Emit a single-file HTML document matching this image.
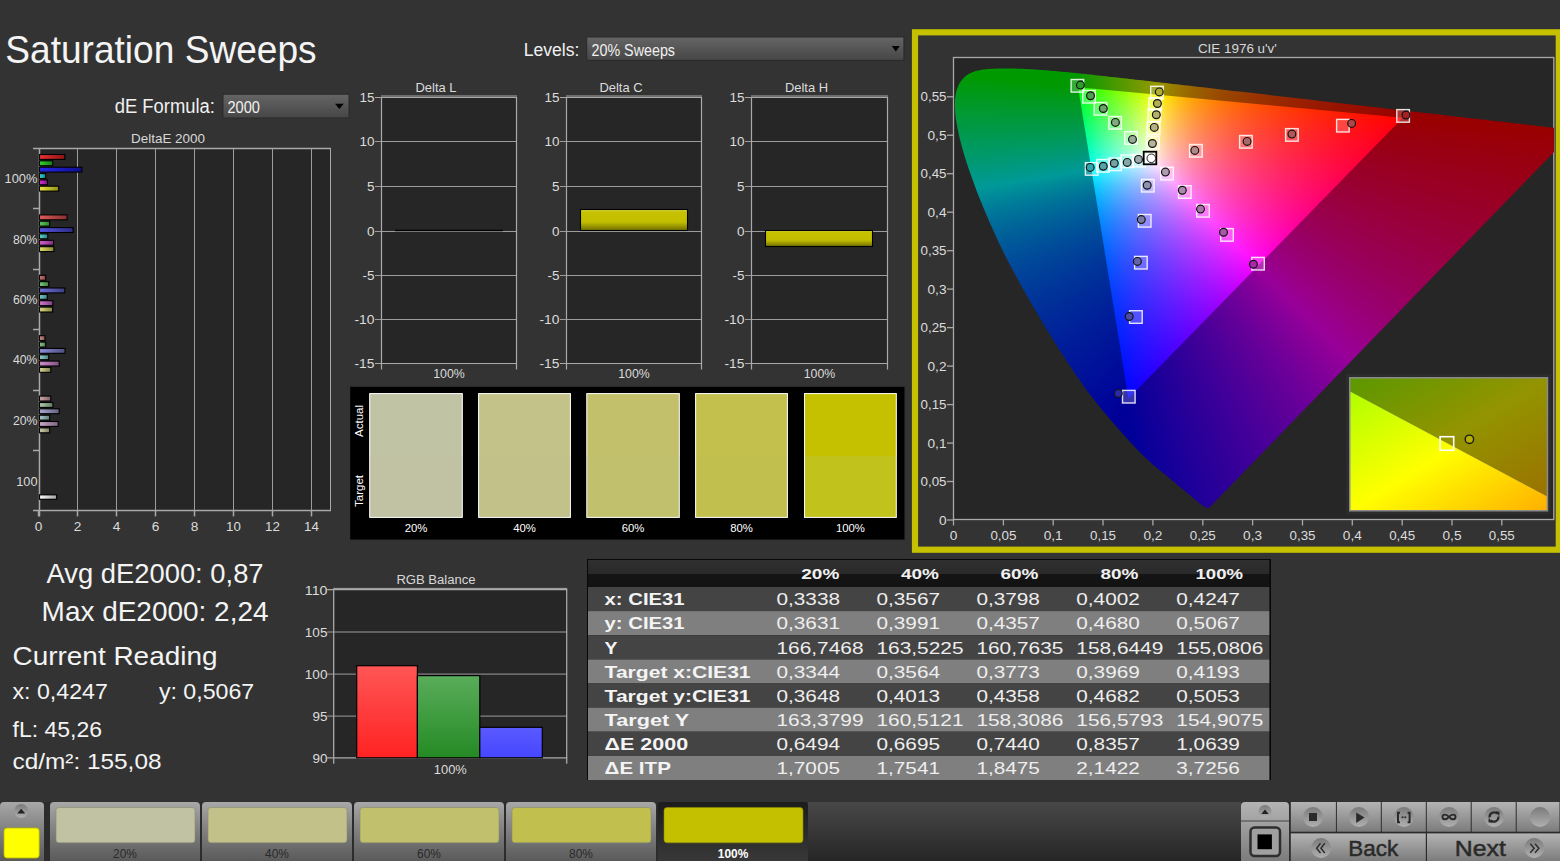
<!DOCTYPE html><html><head><meta charset="utf-8"><style>
html,body{margin:0;padding:0;background:#333333;width:1560px;height:861px;overflow:hidden;}
svg{position:absolute;left:0;top:0;}
text{font-family:"Liberation Sans", sans-serif;}
#cie{position:absolute;left:954px;top:58px;}
</style></head><body>
<svg width="1560" height="861" viewBox="0 0 1560 861">
<defs>
<linearGradient id="dd" x1="0" y1="0" x2="0" y2="1"><stop offset="0" stop-color="#656565"/><stop offset="1" stop-color="#464646"/></linearGradient>
<linearGradient id="ybar" x1="0" y1="0" x2="0" y2="1"><stop offset="0" stop-color="#dcda50"/><stop offset="0.12" stop-color="#c6c200"/><stop offset="0.6" stop-color="#c2be00"/><stop offset="1" stop-color="#6e6c00"/></linearGradient>
<linearGradient id="rbar" x1="0" y1="0" x2="0" y2="1"><stop offset="0" stop-color="#ff5656"/><stop offset="1" stop-color="#ff2222"/></linearGradient>
<linearGradient id="gbar" x1="0" y1="0" x2="0" y2="1"><stop offset="0" stop-color="#5aad5a"/><stop offset="1" stop-color="#248a24"/></linearGradient>
<linearGradient id="bbar" x1="0" y1="0" x2="0" y2="1"><stop offset="0" stop-color="#5a5aff"/><stop offset="1" stop-color="#4646ff"/></linearGradient>
<linearGradient id="hdr" x1="0" y1="0" x2="0" y2="1"><stop offset="0" stop-color="#2f2f2f"/><stop offset="0.5" stop-color="#2a2a2a"/><stop offset="0.5" stop-color="#151515"/><stop offset="1" stop-color="#121212"/></linearGradient>
<linearGradient id="tile" x1="0" y1="0" x2="0" y2="1"><stop offset="0" stop-color="#a8a8a8"/><stop offset="0.35" stop-color="#8a8a8a"/><stop offset="1" stop-color="#5a5a5a"/></linearGradient>
<linearGradient id="tilesel" x1="0" y1="0" x2="0" y2="1"><stop offset="0" stop-color="#1c1c1c"/><stop offset="1" stop-color="#383838"/></linearGradient>
<linearGradient id="barbg" x1="0" y1="0" x2="0" y2="1"><stop offset="0" stop-color="#484848"/><stop offset="1" stop-color="#262626"/></linearGradient>
<linearGradient id="btn" x1="0" y1="0" x2="0" y2="1"><stop offset="0" stop-color="#b4b4b4"/><stop offset="1" stop-color="#7c7c7c"/></linearGradient>
<linearGradient id="circ" x1="0" y1="0" x2="0" y2="1"><stop offset="0" stop-color="#7a7a7a"/><stop offset="1" stop-color="#b0b0b0"/></linearGradient>
</defs>
<text x="5.3" y="62.6" font-size="38.81" fill="#f4f4f4" text-anchor="start" font-weight="normal" textLength="311.3" lengthAdjust="spacingAndGlyphs" >Saturation Sweeps</text>
<text x="523.7" y="55.8" font-size="18.75" fill="#f0f0f0" text-anchor="start" font-weight="normal" textLength="55.7" lengthAdjust="spacingAndGlyphs" >Levels:</text>
<rect x="586.7" y="37.0" width="317.2" height="23.4" fill="url(#dd)" stroke="#2a2a2a" stroke-width="1" />
<text x="591.5" y="56.3" font-size="15.84" fill="#f0f0f0" text-anchor="start" font-weight="normal" textLength="83.5" lengthAdjust="spacingAndGlyphs" >20% Sweeps</text>
<polygon points="891.8,46 899.8,46 895.8,51.5" fill="#000"/>
<text x="114.7" y="113.0" font-size="19.33" fill="#f0f0f0" text-anchor="start" font-weight="normal" textLength="100.3" lengthAdjust="spacingAndGlyphs" >dE Formula:</text>
<rect x="223.0" y="94.2" width="126.0" height="23.8" fill="url(#dd)" stroke="#2a2a2a" stroke-width="1" />
<text x="227.5" y="112.5" font-size="15.84" fill="#f0f0f0" text-anchor="start" font-weight="normal" textLength="32.5" lengthAdjust="spacingAndGlyphs" >2000</text>
<polygon points="335,103.7 343.7,103.7 339.35,109" fill="#000"/>
<text x="131.0" y="142.5" font-size="12.35" fill="#d8d8d8" text-anchor="start" font-weight="normal" textLength="74.0" lengthAdjust="spacingAndGlyphs" >DeltaE 2000</text>
<rect x="39.0" y="148.0" width="292.0" height="362.4" fill="#262626" />
<line x1="77.5" y1="148.0" x2="77.5" y2="510.4" stroke="#9c9c9c" stroke-width="1"/>
<line x1="116.5" y1="148.0" x2="116.5" y2="510.4" stroke="#9c9c9c" stroke-width="1"/>
<line x1="155.5" y1="148.0" x2="155.5" y2="510.4" stroke="#9c9c9c" stroke-width="1"/>
<line x1="194.5" y1="148.0" x2="194.5" y2="510.4" stroke="#9c9c9c" stroke-width="1"/>
<line x1="233.5" y1="148.0" x2="233.5" y2="510.4" stroke="#9c9c9c" stroke-width="1"/>
<line x1="272.5" y1="148.0" x2="272.5" y2="510.4" stroke="#9c9c9c" stroke-width="1"/>
<line x1="311.5" y1="148.0" x2="311.5" y2="510.4" stroke="#9c9c9c" stroke-width="1"/>
<line x1="39.5" y1="148.0" x2="39.5" y2="516.4" stroke="#a9a9a9" stroke-width="1.5"/>
<line x1="33.0" y1="148.5" x2="331.0" y2="148.5" stroke="#a9a9a9" stroke-width="1.5"/>
<line x1="330.5" y1="148.0" x2="330.5" y2="510.4" stroke="#a9a9a9" stroke-width="1"/>
<line x1="33.0" y1="510.4" x2="331.0" y2="510.4" stroke="#a9a9a9" stroke-width="1.5"/>
<line x1="33.0" y1="208.5" x2="39.0" y2="208.5" stroke="#a9a9a9" stroke-width="1.5"/>
<line x1="33.0" y1="269.5" x2="39.0" y2="269.5" stroke="#a9a9a9" stroke-width="1.5"/>
<line x1="33.0" y1="329.5" x2="39.0" y2="329.5" stroke="#a9a9a9" stroke-width="1.5"/>
<line x1="33.0" y1="390.5" x2="39.0" y2="390.5" stroke="#a9a9a9" stroke-width="1.5"/>
<line x1="33.0" y1="450.5" x2="39.0" y2="450.5" stroke="#a9a9a9" stroke-width="1.5"/>
<line x1="38.5" y1="510.4" x2="38.5" y2="516.4" stroke="#a9a9a9" stroke-width="1.5"/>
<text x="38.5" y="531.0" font-size="12.65" fill="#dcdcdc" text-anchor="middle" font-weight="normal" textLength="7.6" lengthAdjust="spacingAndGlyphs" >0</text>
<line x1="77.5" y1="510.4" x2="77.5" y2="516.4" stroke="#a9a9a9" stroke-width="1.5"/>
<text x="77.5" y="531.0" font-size="12.65" fill="#dcdcdc" text-anchor="middle" font-weight="normal" textLength="7.6" lengthAdjust="spacingAndGlyphs" >2</text>
<line x1="116.5" y1="510.4" x2="116.5" y2="516.4" stroke="#a9a9a9" stroke-width="1.5"/>
<text x="116.5" y="531.0" font-size="12.65" fill="#dcdcdc" text-anchor="middle" font-weight="normal" textLength="7.6" lengthAdjust="spacingAndGlyphs" >4</text>
<line x1="155.5" y1="510.4" x2="155.5" y2="516.4" stroke="#a9a9a9" stroke-width="1.5"/>
<text x="155.5" y="531.0" font-size="12.65" fill="#dcdcdc" text-anchor="middle" font-weight="normal" textLength="7.6" lengthAdjust="spacingAndGlyphs" >6</text>
<line x1="194.5" y1="510.4" x2="194.5" y2="516.4" stroke="#a9a9a9" stroke-width="1.5"/>
<text x="194.5" y="531.0" font-size="12.65" fill="#dcdcdc" text-anchor="middle" font-weight="normal" textLength="7.6" lengthAdjust="spacingAndGlyphs" >8</text>
<line x1="233.5" y1="510.4" x2="233.5" y2="516.4" stroke="#a9a9a9" stroke-width="1.5"/>
<text x="233.5" y="531.0" font-size="12.65" fill="#dcdcdc" text-anchor="middle" font-weight="normal" textLength="14.8" lengthAdjust="spacingAndGlyphs" >10</text>
<line x1="272.5" y1="510.4" x2="272.5" y2="516.4" stroke="#a9a9a9" stroke-width="1.5"/>
<text x="272.5" y="531.0" font-size="12.65" fill="#dcdcdc" text-anchor="middle" font-weight="normal" textLength="14.8" lengthAdjust="spacingAndGlyphs" >12</text>
<line x1="311.5" y1="510.4" x2="311.5" y2="516.4" stroke="#a9a9a9" stroke-width="1.5"/>
<text x="311.5" y="531.0" font-size="12.65" fill="#dcdcdc" text-anchor="middle" font-weight="normal" textLength="14.8" lengthAdjust="spacingAndGlyphs" >14</text>
<text x="37.5" y="183.2" font-size="13.23" fill="#dcdcdc" text-anchor="end" font-weight="normal" textLength="33.0" lengthAdjust="spacingAndGlyphs" >100%</text>
<text x="37.5" y="243.6" font-size="13.23" fill="#dcdcdc" text-anchor="end" font-weight="normal" textLength="24.5" lengthAdjust="spacingAndGlyphs" >80%</text>
<text x="37.5" y="304.0" font-size="13.23" fill="#dcdcdc" text-anchor="end" font-weight="normal" textLength="24.5" lengthAdjust="spacingAndGlyphs" >60%</text>
<text x="37.5" y="364.4" font-size="13.23" fill="#dcdcdc" text-anchor="end" font-weight="normal" textLength="24.5" lengthAdjust="spacingAndGlyphs" >40%</text>
<text x="37.5" y="424.8" font-size="13.23" fill="#dcdcdc" text-anchor="end" font-weight="normal" textLength="24.5" lengthAdjust="spacingAndGlyphs" >20%</text>
<text x="37.5" y="485.8" font-size="13.23" fill="#dcdcdc" text-anchor="end" font-weight="normal" textLength="21.3" lengthAdjust="spacingAndGlyphs" >100</text>
<linearGradient id="bg0" x1="0" y1="0" x2="1" y2="0"><stop offset="0" stop-color="rgb(233,48,48)"/><stop offset="1" stop-color="rgb(141,20,20)"/></linearGradient>
<rect x="39.5" y="154.5" width="25.3" height="4.9" fill="url(#bg0)" stroke="#000" stroke-width="1.1" />
<linearGradient id="bg1" x1="0" y1="0" x2="1" y2="0"><stop offset="0" stop-color="rgb(51,211,51)"/><stop offset="1" stop-color="rgb(21,126,21)"/></linearGradient>
<rect x="39.5" y="160.8" width="13.2" height="4.9" fill="url(#bg1)" stroke="#000" stroke-width="1.1" />
<linearGradient id="bg2" x1="0" y1="0" x2="1" y2="0"><stop offset="0" stop-color="rgb(40,40,233)"/><stop offset="1" stop-color="rgb(14,14,141)"/></linearGradient>
<rect x="39.5" y="167.2" width="42.4" height="4.9" fill="url(#bg2)" stroke="#000" stroke-width="1.1" />
<linearGradient id="bg3" x1="0" y1="0" x2="1" y2="0"><stop offset="0" stop-color="rgb(51,216,216)"/><stop offset="1" stop-color="rgb(21,129,129)"/></linearGradient>
<rect x="39.5" y="173.6" width="6.2" height="4.9" fill="url(#bg3)" stroke="#000" stroke-width="1.1" />
<linearGradient id="bg4" x1="0" y1="0" x2="1" y2="0"><stop offset="0" stop-color="rgb(216,51,216)"/><stop offset="1" stop-color="rgb(129,21,129)"/></linearGradient>
<rect x="39.5" y="179.9" width="7.9" height="4.9" fill="url(#bg4)" stroke="#000" stroke-width="1.1" />
<linearGradient id="bg5" x1="0" y1="0" x2="1" y2="0"><stop offset="0" stop-color="rgb(238,233,62)"/><stop offset="1" stop-color="rgb(144,141,28)"/></linearGradient>
<rect x="39.5" y="186.2" width="19.2" height="4.9" fill="url(#bg5)" stroke="#000" stroke-width="1.1" />
<linearGradient id="bg6" x1="0" y1="0" x2="1" y2="0"><stop offset="0" stop-color="rgb(224,91,91)"/><stop offset="1" stop-color="rgb(135,48,48)"/></linearGradient>
<rect x="39.5" y="214.9" width="27.6" height="4.9" fill="url(#bg6)" stroke="#000" stroke-width="1.1" />
<linearGradient id="bg7" x1="0" y1="0" x2="1" y2="0"><stop offset="0" stop-color="rgb(93,209,93)"/><stop offset="1" stop-color="rgb(49,125,49)"/></linearGradient>
<rect x="39.5" y="221.2" width="10.2" height="4.9" fill="url(#bg7)" stroke="#000" stroke-width="1.1" />
<linearGradient id="bg8" x1="0" y1="0" x2="1" y2="0"><stop offset="0" stop-color="rgb(86,86,224)"/><stop offset="1" stop-color="rgb(44,44,135)"/></linearGradient>
<rect x="39.5" y="227.6" width="33.6" height="4.9" fill="url(#bg8)" stroke="#000" stroke-width="1.1" />
<linearGradient id="bg9" x1="0" y1="0" x2="1" y2="0"><stop offset="0" stop-color="rgb(93,212,212)"/><stop offset="1" stop-color="rgb(49,127,127)"/></linearGradient>
<rect x="39.5" y="233.9" width="8.3" height="4.9" fill="url(#bg9)" stroke="#000" stroke-width="1.1" />
<linearGradient id="bg10" x1="0" y1="0" x2="1" y2="0"><stop offset="0" stop-color="rgb(212,93,212)"/><stop offset="1" stop-color="rgb(127,49,127)"/></linearGradient>
<rect x="39.5" y="240.3" width="14.1" height="4.9" fill="url(#bg10)" stroke="#000" stroke-width="1.1" />
<linearGradient id="bg11" x1="0" y1="0" x2="1" y2="0"><stop offset="0" stop-color="rgb(228,224,101)"/><stop offset="1" stop-color="rgb(137,135,54)"/></linearGradient>
<rect x="39.5" y="246.7" width="14.4" height="4.9" fill="url(#bg11)" stroke="#000" stroke-width="1.1" />
<linearGradient id="bg12" x1="0" y1="0" x2="1" y2="0"><stop offset="0" stop-color="rgb(220,118,118)"/><stop offset="1" stop-color="rgb(132,65,65)"/></linearGradient>
<rect x="39.5" y="275.3" width="6.2" height="4.9" fill="url(#bg12)" stroke="#000" stroke-width="1.1" />
<linearGradient id="bg13" x1="0" y1="0" x2="1" y2="0"><stop offset="0" stop-color="rgb(120,208,120)"/><stop offset="1" stop-color="rgb(66,124,66)"/></linearGradient>
<rect x="39.5" y="281.7" width="9.2" height="4.9" fill="url(#bg13)" stroke="#000" stroke-width="1.1" />
<linearGradient id="bg14" x1="0" y1="0" x2="1" y2="0"><stop offset="0" stop-color="rgb(113,113,220)"/><stop offset="1" stop-color="rgb(62,62,132)"/></linearGradient>
<rect x="39.5" y="288.0" width="25.3" height="4.9" fill="url(#bg14)" stroke="#000" stroke-width="1.1" />
<linearGradient id="bg15" x1="0" y1="0" x2="1" y2="0"><stop offset="0" stop-color="rgb(120,210,210)"/><stop offset="1" stop-color="rgb(66,126,126)"/></linearGradient>
<rect x="39.5" y="294.4" width="7.8" height="4.9" fill="url(#bg15)" stroke="#000" stroke-width="1.1" />
<linearGradient id="bg16" x1="0" y1="0" x2="1" y2="0"><stop offset="0" stop-color="rgb(210,120,210)"/><stop offset="1" stop-color="rgb(126,66,126)"/></linearGradient>
<rect x="39.5" y="300.7" width="13.4" height="4.9" fill="url(#bg16)" stroke="#000" stroke-width="1.1" />
<linearGradient id="bg17" x1="0" y1="0" x2="1" y2="0"><stop offset="0" stop-color="rgb(222,220,125)"/><stop offset="1" stop-color="rgb(133,132,70)"/></linearGradient>
<rect x="39.5" y="307.1" width="13.1" height="4.9" fill="url(#bg17)" stroke="#000" stroke-width="1.1" />
<linearGradient id="bg18" x1="0" y1="0" x2="1" y2="0"><stop offset="0" stop-color="rgb(216,142,142)"/><stop offset="1" stop-color="rgb(129,81,81)"/></linearGradient>
<rect x="39.5" y="335.7" width="5.5" height="4.9" fill="url(#bg18)" stroke="#000" stroke-width="1.1" />
<linearGradient id="bg19" x1="0" y1="0" x2="1" y2="0"><stop offset="0" stop-color="rgb(143,207,143)"/><stop offset="1" stop-color="rgb(82,123,82)"/></linearGradient>
<rect x="39.5" y="342.1" width="6.2" height="4.9" fill="url(#bg19)" stroke="#000" stroke-width="1.1" />
<linearGradient id="bg20" x1="0" y1="0" x2="1" y2="0"><stop offset="0" stop-color="rgb(139,139,216)"/><stop offset="1" stop-color="rgb(79,79,129)"/></linearGradient>
<rect x="39.5" y="348.4" width="25.5" height="4.9" fill="url(#bg20)" stroke="#000" stroke-width="1.1" />
<linearGradient id="bg21" x1="0" y1="0" x2="1" y2="0"><stop offset="0" stop-color="rgb(143,209,209)"/><stop offset="1" stop-color="rgb(82,125,125)"/></linearGradient>
<rect x="39.5" y="354.8" width="9.2" height="4.9" fill="url(#bg21)" stroke="#000" stroke-width="1.1" />
<linearGradient id="bg22" x1="0" y1="0" x2="1" y2="0"><stop offset="0" stop-color="rgb(209,143,209)"/><stop offset="1" stop-color="rgb(125,82,125)"/></linearGradient>
<rect x="39.5" y="361.1" width="19.7" height="4.9" fill="url(#bg22)" stroke="#000" stroke-width="1.1" />
<linearGradient id="bg23" x1="0" y1="0" x2="1" y2="0"><stop offset="0" stop-color="rgb(218,216,147)"/><stop offset="1" stop-color="rgb(131,129,84)"/></linearGradient>
<rect x="39.5" y="367.4" width="11.3" height="4.9" fill="url(#bg23)" stroke="#000" stroke-width="1.1" />
<linearGradient id="bg24" x1="0" y1="0" x2="1" y2="0"><stop offset="0" stop-color="rgb(210,169,169)"/><stop offset="1" stop-color="rgb(126,99,99)"/></linearGradient>
<rect x="39.5" y="396.1" width="11.3" height="4.9" fill="url(#bg24)" stroke="#000" stroke-width="1.1" />
<linearGradient id="bg25" x1="0" y1="0" x2="1" y2="0"><stop offset="0" stop-color="rgb(170,206,170)"/><stop offset="1" stop-color="rgb(100,123,100)"/></linearGradient>
<rect x="39.5" y="402.5" width="13.4" height="4.9" fill="url(#bg25)" stroke="#000" stroke-width="1.1" />
<linearGradient id="bg26" x1="0" y1="0" x2="1" y2="0"><stop offset="0" stop-color="rgb(168,168,210)"/><stop offset="1" stop-color="rgb(98,98,126)"/></linearGradient>
<rect x="39.5" y="408.8" width="19.7" height="4.9" fill="url(#bg26)" stroke="#000" stroke-width="1.1" />
<linearGradient id="bg27" x1="0" y1="0" x2="1" y2="0"><stop offset="0" stop-color="rgb(170,207,207)"/><stop offset="1" stop-color="rgb(100,123,123)"/></linearGradient>
<rect x="39.5" y="415.2" width="10.2" height="4.9" fill="url(#bg27)" stroke="#000" stroke-width="1.1" />
<linearGradient id="bg28" x1="0" y1="0" x2="1" y2="0"><stop offset="0" stop-color="rgb(207,170,207)"/><stop offset="1" stop-color="rgb(123,100,123)"/></linearGradient>
<rect x="39.5" y="421.5" width="18.7" height="4.9" fill="url(#bg28)" stroke="#000" stroke-width="1.1" />
<linearGradient id="bg29" x1="0" y1="0" x2="1" y2="0"><stop offset="0" stop-color="rgb(211,210,173)"/><stop offset="1" stop-color="rgb(126,126,101)"/></linearGradient>
<rect x="39.5" y="427.9" width="10.2" height="4.9" fill="url(#bg29)" stroke="#000" stroke-width="1.1" />
<linearGradient id="wbar" x1="0" y1="0" x2="1" y2="0"><stop offset="0" stop-color="#ffffff"/><stop offset="1" stop-color="#a0a0a0"/></linearGradient>
<rect x="39.5" y="494.8" width="17.2" height="4.5" fill="url(#wbar)" stroke="#000" stroke-width="1.2" />
<rect x="381.0" y="97.0" width="135.0" height="266.5" fill="#262626" />
<line x1="375.0" y1="97.5" x2="516.0" y2="97.5" stroke="#a9a9a9" stroke-width="1"/>
<text x="374.5" y="102.0" font-size="12.79" fill="#dcdcdc" text-anchor="end" font-weight="normal" textLength="15.0" lengthAdjust="spacingAndGlyphs" >15</text>
<line x1="375.0" y1="141.5" x2="516.0" y2="141.5" stroke="#9c9c9c" stroke-width="1"/>
<text x="374.5" y="146.0" font-size="12.79" fill="#dcdcdc" text-anchor="end" font-weight="normal" textLength="15.0" lengthAdjust="spacingAndGlyphs" >10</text>
<line x1="375.0" y1="186.5" x2="516.0" y2="186.5" stroke="#9c9c9c" stroke-width="1"/>
<text x="374.5" y="191.0" font-size="12.79" fill="#dcdcdc" text-anchor="end" font-weight="normal" textLength="7.5" lengthAdjust="spacingAndGlyphs" >5</text>
<line x1="375.0" y1="231.5" x2="516.0" y2="231.5" stroke="#9c9c9c" stroke-width="1"/>
<text x="374.5" y="236.0" font-size="12.79" fill="#dcdcdc" text-anchor="end" font-weight="normal" textLength="7.5" lengthAdjust="spacingAndGlyphs" >0</text>
<line x1="375.0" y1="275.5" x2="516.0" y2="275.5" stroke="#9c9c9c" stroke-width="1"/>
<text x="374.5" y="280.0" font-size="12.79" fill="#dcdcdc" text-anchor="end" font-weight="normal" textLength="12.0" lengthAdjust="spacingAndGlyphs" >-5</text>
<line x1="375.0" y1="319.5" x2="516.0" y2="319.5" stroke="#9c9c9c" stroke-width="1"/>
<text x="374.5" y="324.0" font-size="12.79" fill="#dcdcdc" text-anchor="end" font-weight="normal" textLength="20.0" lengthAdjust="spacingAndGlyphs" >-10</text>
<line x1="375.0" y1="363.5" x2="516.0" y2="363.5" stroke="#a9a9a9" stroke-width="1"/>
<text x="374.5" y="368.0" font-size="12.79" fill="#dcdcdc" text-anchor="end" font-weight="normal" textLength="20.0" lengthAdjust="spacingAndGlyphs" >-15</text>
<line x1="381.5" y1="97.0" x2="381.5" y2="369.5" stroke="#a9a9a9" stroke-width="1.2"/>
<line x1="516.5" y1="97.0" x2="516.5" y2="369.5" stroke="#a9a9a9" stroke-width="1.2"/>
<line x1="381.0" y1="96.0" x2="517.0" y2="96.0" stroke="#a9a9a9" stroke-width="1"/>
<text x="436.0" y="92.0" font-size="12.94" fill="#dcdcdc" text-anchor="middle" font-weight="normal" >Delta L</text>
<text x="449.0" y="378.0" font-size="12.35" fill="#dcdcdc" text-anchor="middle" font-weight="normal" >100%</text>
<rect x="566.0" y="97.0" width="135.0" height="266.5" fill="#262626" />
<line x1="560.0" y1="97.5" x2="701.0" y2="97.5" stroke="#a9a9a9" stroke-width="1"/>
<text x="559.5" y="102.0" font-size="12.79" fill="#dcdcdc" text-anchor="end" font-weight="normal" textLength="15.0" lengthAdjust="spacingAndGlyphs" >15</text>
<line x1="560.0" y1="141.5" x2="701.0" y2="141.5" stroke="#9c9c9c" stroke-width="1"/>
<text x="559.5" y="146.0" font-size="12.79" fill="#dcdcdc" text-anchor="end" font-weight="normal" textLength="15.0" lengthAdjust="spacingAndGlyphs" >10</text>
<line x1="560.0" y1="186.5" x2="701.0" y2="186.5" stroke="#9c9c9c" stroke-width="1"/>
<text x="559.5" y="191.0" font-size="12.79" fill="#dcdcdc" text-anchor="end" font-weight="normal" textLength="7.5" lengthAdjust="spacingAndGlyphs" >5</text>
<line x1="560.0" y1="231.5" x2="701.0" y2="231.5" stroke="#9c9c9c" stroke-width="1"/>
<text x="559.5" y="236.0" font-size="12.79" fill="#dcdcdc" text-anchor="end" font-weight="normal" textLength="7.5" lengthAdjust="spacingAndGlyphs" >0</text>
<line x1="560.0" y1="275.5" x2="701.0" y2="275.5" stroke="#9c9c9c" stroke-width="1"/>
<text x="559.5" y="280.0" font-size="12.79" fill="#dcdcdc" text-anchor="end" font-weight="normal" textLength="12.0" lengthAdjust="spacingAndGlyphs" >-5</text>
<line x1="560.0" y1="319.5" x2="701.0" y2="319.5" stroke="#9c9c9c" stroke-width="1"/>
<text x="559.5" y="324.0" font-size="12.79" fill="#dcdcdc" text-anchor="end" font-weight="normal" textLength="20.0" lengthAdjust="spacingAndGlyphs" >-10</text>
<line x1="560.0" y1="363.5" x2="701.0" y2="363.5" stroke="#a9a9a9" stroke-width="1"/>
<text x="559.5" y="368.0" font-size="12.79" fill="#dcdcdc" text-anchor="end" font-weight="normal" textLength="20.0" lengthAdjust="spacingAndGlyphs" >-15</text>
<line x1="566.5" y1="97.0" x2="566.5" y2="369.5" stroke="#a9a9a9" stroke-width="1.2"/>
<line x1="701.5" y1="97.0" x2="701.5" y2="369.5" stroke="#a9a9a9" stroke-width="1.2"/>
<line x1="566.0" y1="96.0" x2="702.0" y2="96.0" stroke="#a9a9a9" stroke-width="1"/>
<text x="621.0" y="92.0" font-size="12.94" fill="#dcdcdc" text-anchor="middle" font-weight="normal" >Delta C</text>
<text x="634.0" y="378.0" font-size="12.35" fill="#dcdcdc" text-anchor="middle" font-weight="normal" >100%</text>
<rect x="751.0" y="97.0" width="136.0" height="266.5" fill="#262626" />
<line x1="745.0" y1="97.5" x2="887.0" y2="97.5" stroke="#a9a9a9" stroke-width="1"/>
<text x="744.5" y="102.0" font-size="12.79" fill="#dcdcdc" text-anchor="end" font-weight="normal" textLength="15.0" lengthAdjust="spacingAndGlyphs" >15</text>
<line x1="745.0" y1="141.5" x2="887.0" y2="141.5" stroke="#9c9c9c" stroke-width="1"/>
<text x="744.5" y="146.0" font-size="12.79" fill="#dcdcdc" text-anchor="end" font-weight="normal" textLength="15.0" lengthAdjust="spacingAndGlyphs" >10</text>
<line x1="745.0" y1="186.5" x2="887.0" y2="186.5" stroke="#9c9c9c" stroke-width="1"/>
<text x="744.5" y="191.0" font-size="12.79" fill="#dcdcdc" text-anchor="end" font-weight="normal" textLength="7.5" lengthAdjust="spacingAndGlyphs" >5</text>
<line x1="745.0" y1="231.5" x2="887.0" y2="231.5" stroke="#9c9c9c" stroke-width="1"/>
<text x="744.5" y="236.0" font-size="12.79" fill="#dcdcdc" text-anchor="end" font-weight="normal" textLength="7.5" lengthAdjust="spacingAndGlyphs" >0</text>
<line x1="745.0" y1="275.5" x2="887.0" y2="275.5" stroke="#9c9c9c" stroke-width="1"/>
<text x="744.5" y="280.0" font-size="12.79" fill="#dcdcdc" text-anchor="end" font-weight="normal" textLength="12.0" lengthAdjust="spacingAndGlyphs" >-5</text>
<line x1="745.0" y1="319.5" x2="887.0" y2="319.5" stroke="#9c9c9c" stroke-width="1"/>
<text x="744.5" y="324.0" font-size="12.79" fill="#dcdcdc" text-anchor="end" font-weight="normal" textLength="20.0" lengthAdjust="spacingAndGlyphs" >-10</text>
<line x1="745.0" y1="363.5" x2="887.0" y2="363.5" stroke="#a9a9a9" stroke-width="1"/>
<text x="744.5" y="368.0" font-size="12.79" fill="#dcdcdc" text-anchor="end" font-weight="normal" textLength="20.0" lengthAdjust="spacingAndGlyphs" >-15</text>
<line x1="751.5" y1="97.0" x2="751.5" y2="369.5" stroke="#a9a9a9" stroke-width="1.2"/>
<line x1="887.5" y1="97.0" x2="887.5" y2="369.5" stroke="#a9a9a9" stroke-width="1.2"/>
<line x1="751.0" y1="96.0" x2="888.0" y2="96.0" stroke="#a9a9a9" stroke-width="1"/>
<text x="806.5" y="92.0" font-size="12.94" fill="#dcdcdc" text-anchor="middle" font-weight="normal" >Delta H</text>
<text x="819.5" y="378.0" font-size="12.35" fill="#dcdcdc" text-anchor="middle" font-weight="normal" >100%</text>
<line x1="395.0" y1="230.5" x2="502.8" y2="230.5" stroke="#000" stroke-width="1.5"/>
<rect x="580.5" y="209.5" width="107.0" height="21.0" fill="url(#ybar)" stroke="#000" stroke-width="1.1" />
<rect x="765.5" y="230.5" width="107.0" height="16.0" fill="url(#ybar)" stroke="#000" stroke-width="1.1" />
<rect x="350.2" y="386.8" width="554.3" height="152.8" fill="#000" />
<rect x="369.7" y="393.6" width="92.6" height="123.8" fill="#c1c2a4" />
<rect x="369.7" y="393.6" width="92.6" height="62.5" fill="#c1c3a5" />
<rect x="369.7" y="393.6" width="92.6" height="123.8" fill="none" stroke="#ffffff" stroke-width="1" />
<text x="416.0" y="532.0" font-size="11.34" fill="#ffffff" text-anchor="middle" font-weight="normal" >20%</text>
<rect x="478.6" y="393.6" width="91.8" height="123.8" fill="#c1c189" />
<rect x="478.6" y="393.6" width="91.8" height="62.5" fill="#c2c289" />
<rect x="478.6" y="393.6" width="91.8" height="123.8" fill="none" stroke="#ffffff" stroke-width="1" />
<text x="524.5" y="532.0" font-size="11.34" fill="#ffffff" text-anchor="middle" font-weight="normal" >40%</text>
<rect x="586.8" y="393.6" width="92.5" height="123.8" fill="#c0c06d" />
<rect x="586.8" y="393.6" width="92.5" height="62.5" fill="#c2c06a" />
<rect x="586.8" y="393.6" width="92.5" height="123.8" fill="none" stroke="#ffffff" stroke-width="1" />
<text x="633.0" y="532.0" font-size="11.34" fill="#ffffff" text-anchor="middle" font-weight="normal" >60%</text>
<rect x="695.6" y="393.6" width="91.8" height="123.8" fill="#c1c04e" />
<rect x="695.6" y="393.6" width="91.8" height="62.5" fill="#c3c04e" />
<rect x="695.6" y="393.6" width="91.8" height="123.8" fill="none" stroke="#ffffff" stroke-width="1" />
<text x="741.5" y="532.0" font-size="11.34" fill="#ffffff" text-anchor="middle" font-weight="normal" >80%</text>
<rect x="804.5" y="393.6" width="91.8" height="123.8" fill="#c2c21c" />
<rect x="804.5" y="393.6" width="91.8" height="62.5" fill="#c5c000" />
<rect x="804.5" y="393.6" width="91.8" height="123.8" fill="none" stroke="#ffffff" stroke-width="1" />
<text x="850.4" y="532.0" font-size="11.34" fill="#ffffff" text-anchor="middle" font-weight="normal" >100%</text>
<text transform="translate(362.5,421) rotate(-90)" font-size="11.5" fill="#ffffff" text-anchor="middle" font-family='"Liberation Sans", sans-serif'>Actual</text>
<text transform="translate(362.5,491) rotate(-90)" font-size="11.5" fill="#ffffff" text-anchor="middle">Target</text>
<rect x="915.0" y="32.3" width="643.8" height="517.4" fill="none" stroke="#c5c100" stroke-width="6.2" />
<text x="1197.9" y="53.0" font-size="13.08" fill="#d8d8d8" text-anchor="start" font-weight="normal" textLength="79.0" lengthAdjust="spacingAndGlyphs" >CIE 1976 u'v'</text>
<rect x="953.5" y="57.5" width="600.3" height="462.0" fill="#262626" stroke="#a9a9a9" stroke-width="1.3" />
<line x1="947.0" y1="520.0" x2="953.5" y2="520.0" stroke="#a9a9a9" stroke-width="1.3"/>
<text x="946.5" y="524.6" font-size="12.79" fill="#dcdcdc" text-anchor="end" font-weight="normal" textLength="7.6" lengthAdjust="spacingAndGlyphs" >0</text>
<line x1="953.5" y1="519.5" x2="953.5" y2="525.5" stroke="#a9a9a9" stroke-width="1.3"/>
<text x="953.5" y="539.6" font-size="12.79" fill="#dcdcdc" text-anchor="middle" font-weight="normal" textLength="7.6" lengthAdjust="spacingAndGlyphs" >0</text>
<line x1="947.0" y1="481.5" x2="953.5" y2="481.5" stroke="#a9a9a9" stroke-width="1.3"/>
<text x="946.5" y="486.1" font-size="12.79" fill="#dcdcdc" text-anchor="end" font-weight="normal" textLength="26.0" lengthAdjust="spacingAndGlyphs" >0,05</text>
<line x1="1003.4" y1="519.5" x2="1003.4" y2="525.5" stroke="#a9a9a9" stroke-width="1.3"/>
<text x="1003.4" y="539.6" font-size="12.79" fill="#dcdcdc" text-anchor="middle" font-weight="normal" textLength="26.0" lengthAdjust="spacingAndGlyphs" >0,05</text>
<line x1="947.0" y1="443.1" x2="953.5" y2="443.1" stroke="#a9a9a9" stroke-width="1.3"/>
<text x="946.5" y="447.7" font-size="12.79" fill="#dcdcdc" text-anchor="end" font-weight="normal" textLength="19.0" lengthAdjust="spacingAndGlyphs" >0,1</text>
<line x1="1053.2" y1="519.5" x2="1053.2" y2="525.5" stroke="#a9a9a9" stroke-width="1.3"/>
<text x="1053.2" y="539.6" font-size="12.79" fill="#dcdcdc" text-anchor="middle" font-weight="normal" textLength="19.0" lengthAdjust="spacingAndGlyphs" >0,1</text>
<line x1="947.0" y1="404.6" x2="953.5" y2="404.6" stroke="#a9a9a9" stroke-width="1.3"/>
<text x="946.5" y="409.2" font-size="12.79" fill="#dcdcdc" text-anchor="end" font-weight="normal" textLength="26.0" lengthAdjust="spacingAndGlyphs" >0,15</text>
<line x1="1103.0" y1="519.5" x2="1103.0" y2="525.5" stroke="#a9a9a9" stroke-width="1.3"/>
<text x="1103.0" y="539.6" font-size="12.79" fill="#dcdcdc" text-anchor="middle" font-weight="normal" textLength="26.0" lengthAdjust="spacingAndGlyphs" >0,15</text>
<line x1="947.0" y1="366.1" x2="953.5" y2="366.1" stroke="#a9a9a9" stroke-width="1.3"/>
<text x="946.5" y="370.7" font-size="12.79" fill="#dcdcdc" text-anchor="end" font-weight="normal" textLength="19.0" lengthAdjust="spacingAndGlyphs" >0,2</text>
<line x1="1152.9" y1="519.5" x2="1152.9" y2="525.5" stroke="#a9a9a9" stroke-width="1.3"/>
<text x="1152.9" y="539.6" font-size="12.79" fill="#dcdcdc" text-anchor="middle" font-weight="normal" textLength="19.0" lengthAdjust="spacingAndGlyphs" >0,2</text>
<line x1="947.0" y1="327.6" x2="953.5" y2="327.6" stroke="#a9a9a9" stroke-width="1.3"/>
<text x="946.5" y="332.2" font-size="12.79" fill="#dcdcdc" text-anchor="end" font-weight="normal" textLength="26.0" lengthAdjust="spacingAndGlyphs" >0,25</text>
<line x1="1202.8" y1="519.5" x2="1202.8" y2="525.5" stroke="#a9a9a9" stroke-width="1.3"/>
<text x="1202.8" y="539.6" font-size="12.79" fill="#dcdcdc" text-anchor="middle" font-weight="normal" textLength="26.0" lengthAdjust="spacingAndGlyphs" >0,25</text>
<line x1="947.0" y1="289.1" x2="953.5" y2="289.1" stroke="#a9a9a9" stroke-width="1.3"/>
<text x="946.5" y="293.8" font-size="12.79" fill="#dcdcdc" text-anchor="end" font-weight="normal" textLength="19.0" lengthAdjust="spacingAndGlyphs" >0,3</text>
<line x1="1252.6" y1="519.5" x2="1252.6" y2="525.5" stroke="#a9a9a9" stroke-width="1.3"/>
<text x="1252.6" y="539.6" font-size="12.79" fill="#dcdcdc" text-anchor="middle" font-weight="normal" textLength="19.0" lengthAdjust="spacingAndGlyphs" >0,3</text>
<line x1="947.0" y1="250.7" x2="953.5" y2="250.7" stroke="#a9a9a9" stroke-width="1.3"/>
<text x="946.5" y="255.3" font-size="12.79" fill="#dcdcdc" text-anchor="end" font-weight="normal" textLength="26.0" lengthAdjust="spacingAndGlyphs" >0,35</text>
<line x1="1302.5" y1="519.5" x2="1302.5" y2="525.5" stroke="#a9a9a9" stroke-width="1.3"/>
<text x="1302.5" y="539.6" font-size="12.79" fill="#dcdcdc" text-anchor="middle" font-weight="normal" textLength="26.0" lengthAdjust="spacingAndGlyphs" >0,35</text>
<line x1="947.0" y1="212.2" x2="953.5" y2="212.2" stroke="#a9a9a9" stroke-width="1.3"/>
<text x="946.5" y="216.8" font-size="12.79" fill="#dcdcdc" text-anchor="end" font-weight="normal" textLength="19.0" lengthAdjust="spacingAndGlyphs" >0,4</text>
<line x1="1352.3" y1="519.5" x2="1352.3" y2="525.5" stroke="#a9a9a9" stroke-width="1.3"/>
<text x="1352.3" y="539.6" font-size="12.79" fill="#dcdcdc" text-anchor="middle" font-weight="normal" textLength="19.0" lengthAdjust="spacingAndGlyphs" >0,4</text>
<line x1="947.0" y1="173.7" x2="953.5" y2="173.7" stroke="#a9a9a9" stroke-width="1.3"/>
<text x="946.5" y="178.3" font-size="12.79" fill="#dcdcdc" text-anchor="end" font-weight="normal" textLength="26.0" lengthAdjust="spacingAndGlyphs" >0,45</text>
<line x1="1402.2" y1="519.5" x2="1402.2" y2="525.5" stroke="#a9a9a9" stroke-width="1.3"/>
<text x="1402.2" y="539.6" font-size="12.79" fill="#dcdcdc" text-anchor="middle" font-weight="normal" textLength="26.0" lengthAdjust="spacingAndGlyphs" >0,45</text>
<line x1="947.0" y1="135.2" x2="953.5" y2="135.2" stroke="#a9a9a9" stroke-width="1.3"/>
<text x="946.5" y="139.8" font-size="12.79" fill="#dcdcdc" text-anchor="end" font-weight="normal" textLength="19.0" lengthAdjust="spacingAndGlyphs" >0,5</text>
<line x1="1452.0" y1="519.5" x2="1452.0" y2="525.5" stroke="#a9a9a9" stroke-width="1.3"/>
<text x="1452.0" y="539.6" font-size="12.79" fill="#dcdcdc" text-anchor="middle" font-weight="normal" textLength="19.0" lengthAdjust="spacingAndGlyphs" >0,5</text>
<line x1="947.0" y1="96.8" x2="953.5" y2="96.8" stroke="#a9a9a9" stroke-width="1.3"/>
<text x="946.5" y="101.4" font-size="12.79" fill="#dcdcdc" text-anchor="end" font-weight="normal" textLength="26.0" lengthAdjust="spacingAndGlyphs" >0,55</text>
<line x1="1501.8" y1="519.5" x2="1501.8" y2="525.5" stroke="#a9a9a9" stroke-width="1.3"/>
<text x="1501.8" y="539.6" font-size="12.79" fill="#dcdcdc" text-anchor="middle" font-weight="normal" textLength="26.0" lengthAdjust="spacingAndGlyphs" >0,55</text>
<text x="46.5" y="583.3" font-size="28.05" fill="#f4f4f4" text-anchor="start" font-weight="normal" textLength="217.1" lengthAdjust="spacingAndGlyphs" >Avg dE2000: 0,87</text>
<text x="41.6" y="621.0" font-size="28.05" fill="#f4f4f4" text-anchor="start" font-weight="normal" textLength="226.9" lengthAdjust="spacingAndGlyphs" >Max dE2000: 2,24</text>
<text x="12.5" y="665.4" font-size="26.45" fill="#f4f4f4" text-anchor="start" font-weight="normal" textLength="205.0" lengthAdjust="spacingAndGlyphs" >Current Reading</text>
<text x="12.5" y="699.4" font-size="22.09" fill="#f4f4f4" text-anchor="start" font-weight="normal" textLength="95.3" lengthAdjust="spacingAndGlyphs" >x: 0,4247</text>
<text x="158.9" y="699.4" font-size="22.09" fill="#f4f4f4" text-anchor="start" font-weight="normal" textLength="95.3" lengthAdjust="spacingAndGlyphs" >y: 0,5067</text>
<text x="12.5" y="737.2" font-size="22.09" fill="#f4f4f4" text-anchor="start" font-weight="normal" textLength="89.5" lengthAdjust="spacingAndGlyphs" >fL: 45,26</text>
<text x="12.5" y="769.4" font-size="22.09" fill="#f4f4f4" text-anchor="start" font-weight="normal" textLength="149.0" lengthAdjust="spacingAndGlyphs" >cd/m²: 155,08</text>
<text x="436.0" y="584.2" font-size="13.08" fill="#d8d8d8" text-anchor="middle" font-weight="normal" >RGB Balance</text>
<rect x="333.2" y="589.2" width="234.0" height="168.6" fill="#262626" />
<line x1="333.2" y1="588.4" x2="567.2" y2="588.4" stroke="#a9a9a9" stroke-width="1"/>
<line x1="327.2" y1="589.7" x2="567.2" y2="589.7" stroke="#a9a9a9" stroke-width="1.3"/>
<text x="327.5" y="594.5" font-size="13.08" fill="#dcdcdc" text-anchor="end" font-weight="normal" textLength="22.7" lengthAdjust="spacingAndGlyphs" >110</text>
<line x1="327.2" y1="632.0" x2="567.2" y2="632.0" stroke="#9c9c9c" stroke-width="1.0"/>
<text x="327.5" y="636.8" font-size="13.08" fill="#dcdcdc" text-anchor="end" font-weight="normal" textLength="22.7" lengthAdjust="spacingAndGlyphs" >105</text>
<line x1="327.2" y1="674.1" x2="567.2" y2="674.1" stroke="#9c9c9c" stroke-width="1.0"/>
<text x="327.5" y="678.9" font-size="13.08" fill="#dcdcdc" text-anchor="end" font-weight="normal" textLength="22.7" lengthAdjust="spacingAndGlyphs" >100</text>
<line x1="327.2" y1="716.1" x2="567.2" y2="716.1" stroke="#9c9c9c" stroke-width="1.0"/>
<text x="327.5" y="720.9" font-size="13.08" fill="#dcdcdc" text-anchor="end" font-weight="normal" textLength="15.0" lengthAdjust="spacingAndGlyphs" >95</text>
<line x1="327.2" y1="757.8" x2="567.2" y2="757.8" stroke="#a9a9a9" stroke-width="1.3"/>
<text x="327.5" y="762.6" font-size="13.08" fill="#dcdcdc" text-anchor="end" font-weight="normal" textLength="15.0" lengthAdjust="spacingAndGlyphs" >90</text>
<line x1="333.7" y1="589.2" x2="333.7" y2="763.8" stroke="#a9a9a9" stroke-width="1.3"/>
<line x1="566.7" y1="589.2" x2="566.7" y2="763.8" stroke="#a9a9a9" stroke-width="1.3"/>
<rect x="356.7" y="665.7" width="60.7" height="92.1" fill="url(#rbar)" stroke="#000" stroke-width="1.2" />
<rect x="417.4" y="675.6" width="62.4" height="82.2" fill="url(#gbar)" stroke="#000" stroke-width="1.2" />
<rect x="479.8" y="727.3" width="62.5" height="30.5" fill="url(#bbar)" stroke="#000" stroke-width="1.2" />
<text x="450.3" y="773.5" font-size="13.08" fill="#dcdcdc" text-anchor="middle" font-weight="normal" textLength="33.0" lengthAdjust="spacingAndGlyphs" >100%</text>
<rect x="587.0" y="559.0" width="684.0" height="221.0" fill="#080808" />
<rect x="588.0" y="560.0" width="681.4" height="27.0" fill="url(#hdr)" />
<text x="839.3" y="579.0" font-size="13.95" fill="#f0f0f0" text-anchor="end" font-weight="bold" textLength="38.0" lengthAdjust="spacingAndGlyphs" >20%</text>
<text x="938.9" y="579.0" font-size="13.95" fill="#f0f0f0" text-anchor="end" font-weight="bold" textLength="38.0" lengthAdjust="spacingAndGlyphs" >40%</text>
<text x="1038.5" y="579.0" font-size="13.95" fill="#f0f0f0" text-anchor="end" font-weight="bold" textLength="38.0" lengthAdjust="spacingAndGlyphs" >60%</text>
<text x="1138.5" y="579.0" font-size="13.95" fill="#f0f0f0" text-anchor="end" font-weight="bold" textLength="38.0" lengthAdjust="spacingAndGlyphs" >80%</text>
<text x="1243.0" y="579.0" font-size="13.95" fill="#f0f0f0" text-anchor="end" font-weight="bold" textLength="47.5" lengthAdjust="spacingAndGlyphs" >100%</text>
<rect x="588.0" y="587.0" width="681.4" height="24.1" fill="#444444" />
<text x="604.6" y="605.2" font-size="15.70" fill="#f4f4f4" text-anchor="start" font-weight="bold" textLength="80.0" lengthAdjust="spacingAndGlyphs" >x: CIE31</text>
<text x="776.5" y="605.2" font-size="15.70" fill="#eeeeee" text-anchor="start" font-weight="normal" textLength="63.5" lengthAdjust="spacingAndGlyphs" >0,3338</text>
<text x="876.5" y="605.2" font-size="15.70" fill="#eeeeee" text-anchor="start" font-weight="normal" textLength="63.5" lengthAdjust="spacingAndGlyphs" >0,3567</text>
<text x="976.4" y="605.2" font-size="15.70" fill="#eeeeee" text-anchor="start" font-weight="normal" textLength="63.5" lengthAdjust="spacingAndGlyphs" >0,3798</text>
<text x="1076.3" y="605.2" font-size="15.70" fill="#eeeeee" text-anchor="start" font-weight="normal" textLength="63.5" lengthAdjust="spacingAndGlyphs" >0,4002</text>
<text x="1176.3" y="605.2" font-size="15.70" fill="#eeeeee" text-anchor="start" font-weight="normal" textLength="63.5" lengthAdjust="spacingAndGlyphs" >0,4247</text>
<rect x="588.0" y="611.1" width="681.4" height="24.1" fill="#7f7f7f" />
<text x="604.6" y="629.3" font-size="15.70" fill="#f4f4f4" text-anchor="start" font-weight="bold" textLength="80.0" lengthAdjust="spacingAndGlyphs" >y: CIE31</text>
<text x="776.5" y="629.3" font-size="15.70" fill="#eeeeee" text-anchor="start" font-weight="normal" textLength="63.5" lengthAdjust="spacingAndGlyphs" >0,3631</text>
<text x="876.5" y="629.3" font-size="15.70" fill="#eeeeee" text-anchor="start" font-weight="normal" textLength="63.5" lengthAdjust="spacingAndGlyphs" >0,3991</text>
<text x="976.4" y="629.3" font-size="15.70" fill="#eeeeee" text-anchor="start" font-weight="normal" textLength="63.5" lengthAdjust="spacingAndGlyphs" >0,4357</text>
<text x="1076.3" y="629.3" font-size="15.70" fill="#eeeeee" text-anchor="start" font-weight="normal" textLength="63.5" lengthAdjust="spacingAndGlyphs" >0,4680</text>
<text x="1176.3" y="629.3" font-size="15.70" fill="#eeeeee" text-anchor="start" font-weight="normal" textLength="63.5" lengthAdjust="spacingAndGlyphs" >0,5067</text>
<rect x="588.0" y="635.2" width="681.4" height="24.1" fill="#444444" />
<text x="604.6" y="653.5" font-size="15.70" fill="#f4f4f4" text-anchor="start" font-weight="bold" textLength="13.0" lengthAdjust="spacingAndGlyphs" >Y</text>
<text x="776.5" y="653.5" font-size="15.70" fill="#eeeeee" text-anchor="start" font-weight="normal" textLength="87.0" lengthAdjust="spacingAndGlyphs" >166,7468</text>
<text x="876.5" y="653.5" font-size="15.70" fill="#eeeeee" text-anchor="start" font-weight="normal" textLength="87.0" lengthAdjust="spacingAndGlyphs" >163,5225</text>
<text x="976.4" y="653.5" font-size="15.70" fill="#eeeeee" text-anchor="start" font-weight="normal" textLength="87.0" lengthAdjust="spacingAndGlyphs" >160,7635</text>
<text x="1076.3" y="653.5" font-size="15.70" fill="#eeeeee" text-anchor="start" font-weight="normal" textLength="87.0" lengthAdjust="spacingAndGlyphs" >158,6449</text>
<text x="1176.3" y="653.5" font-size="15.70" fill="#eeeeee" text-anchor="start" font-weight="normal" textLength="87.0" lengthAdjust="spacingAndGlyphs" >155,0806</text>
<rect x="588.0" y="659.4" width="681.4" height="24.1" fill="#7f7f7f" />
<text x="604.6" y="677.6" font-size="15.70" fill="#f4f4f4" text-anchor="start" font-weight="bold" textLength="146.0" lengthAdjust="spacingAndGlyphs" >Target x:CIE31</text>
<text x="776.5" y="677.6" font-size="15.70" fill="#eeeeee" text-anchor="start" font-weight="normal" textLength="63.5" lengthAdjust="spacingAndGlyphs" >0,3344</text>
<text x="876.5" y="677.6" font-size="15.70" fill="#eeeeee" text-anchor="start" font-weight="normal" textLength="63.5" lengthAdjust="spacingAndGlyphs" >0,3564</text>
<text x="976.4" y="677.6" font-size="15.70" fill="#eeeeee" text-anchor="start" font-weight="normal" textLength="63.5" lengthAdjust="spacingAndGlyphs" >0,3773</text>
<text x="1076.3" y="677.6" font-size="15.70" fill="#eeeeee" text-anchor="start" font-weight="normal" textLength="63.5" lengthAdjust="spacingAndGlyphs" >0,3969</text>
<text x="1176.3" y="677.6" font-size="15.70" fill="#eeeeee" text-anchor="start" font-weight="normal" textLength="63.5" lengthAdjust="spacingAndGlyphs" >0,4193</text>
<rect x="588.0" y="683.5" width="681.4" height="24.1" fill="#444444" />
<text x="604.6" y="701.7" font-size="15.70" fill="#f4f4f4" text-anchor="start" font-weight="bold" textLength="146.0" lengthAdjust="spacingAndGlyphs" >Target y:CIE31</text>
<text x="776.5" y="701.7" font-size="15.70" fill="#eeeeee" text-anchor="start" font-weight="normal" textLength="63.5" lengthAdjust="spacingAndGlyphs" >0,3648</text>
<text x="876.5" y="701.7" font-size="15.70" fill="#eeeeee" text-anchor="start" font-weight="normal" textLength="63.5" lengthAdjust="spacingAndGlyphs" >0,4013</text>
<text x="976.4" y="701.7" font-size="15.70" fill="#eeeeee" text-anchor="start" font-weight="normal" textLength="63.5" lengthAdjust="spacingAndGlyphs" >0,4358</text>
<text x="1076.3" y="701.7" font-size="15.70" fill="#eeeeee" text-anchor="start" font-weight="normal" textLength="63.5" lengthAdjust="spacingAndGlyphs" >0,4682</text>
<text x="1176.3" y="701.7" font-size="15.70" fill="#eeeeee" text-anchor="start" font-weight="normal" textLength="63.5" lengthAdjust="spacingAndGlyphs" >0,5053</text>
<rect x="588.0" y="707.6" width="681.4" height="24.1" fill="#7f7f7f" />
<text x="604.6" y="725.8" font-size="15.70" fill="#f4f4f4" text-anchor="start" font-weight="bold" textLength="84.6" lengthAdjust="spacingAndGlyphs" >Target Y</text>
<text x="776.5" y="725.8" font-size="15.70" fill="#eeeeee" text-anchor="start" font-weight="normal" textLength="87.0" lengthAdjust="spacingAndGlyphs" >163,3799</text>
<text x="876.5" y="725.8" font-size="15.70" fill="#eeeeee" text-anchor="start" font-weight="normal" textLength="87.0" lengthAdjust="spacingAndGlyphs" >160,5121</text>
<text x="976.4" y="725.8" font-size="15.70" fill="#eeeeee" text-anchor="start" font-weight="normal" textLength="87.0" lengthAdjust="spacingAndGlyphs" >158,3086</text>
<text x="1076.3" y="725.8" font-size="15.70" fill="#eeeeee" text-anchor="start" font-weight="normal" textLength="87.0" lengthAdjust="spacingAndGlyphs" >156,5793</text>
<text x="1176.3" y="725.8" font-size="15.70" fill="#eeeeee" text-anchor="start" font-weight="normal" textLength="87.0" lengthAdjust="spacingAndGlyphs" >154,9075</text>
<rect x="588.0" y="731.8" width="681.4" height="24.1" fill="#444444" />
<text x="604.6" y="750.0" font-size="15.70" fill="#f4f4f4" text-anchor="start" font-weight="bold" textLength="83.6" lengthAdjust="spacingAndGlyphs" >ΔE 2000</text>
<text x="776.5" y="750.0" font-size="15.70" fill="#eeeeee" text-anchor="start" font-weight="normal" textLength="63.5" lengthAdjust="spacingAndGlyphs" >0,6494</text>
<text x="876.5" y="750.0" font-size="15.70" fill="#eeeeee" text-anchor="start" font-weight="normal" textLength="63.5" lengthAdjust="spacingAndGlyphs" >0,6695</text>
<text x="976.4" y="750.0" font-size="15.70" fill="#eeeeee" text-anchor="start" font-weight="normal" textLength="63.5" lengthAdjust="spacingAndGlyphs" >0,7440</text>
<text x="1076.3" y="750.0" font-size="15.70" fill="#eeeeee" text-anchor="start" font-weight="normal" textLength="63.5" lengthAdjust="spacingAndGlyphs" >0,8357</text>
<text x="1176.3" y="750.0" font-size="15.70" fill="#eeeeee" text-anchor="start" font-weight="normal" textLength="63.5" lengthAdjust="spacingAndGlyphs" >1,0639</text>
<rect x="588.0" y="755.9" width="681.4" height="24.1" fill="#7f7f7f" />
<text x="604.6" y="774.1" font-size="15.70" fill="#f4f4f4" text-anchor="start" font-weight="bold" textLength="66.3" lengthAdjust="spacingAndGlyphs" >ΔE ITP</text>
<text x="776.5" y="774.1" font-size="15.70" fill="#eeeeee" text-anchor="start" font-weight="normal" textLength="63.5" lengthAdjust="spacingAndGlyphs" >1,7005</text>
<text x="876.5" y="774.1" font-size="15.70" fill="#eeeeee" text-anchor="start" font-weight="normal" textLength="63.5" lengthAdjust="spacingAndGlyphs" >1,7541</text>
<text x="976.4" y="774.1" font-size="15.70" fill="#eeeeee" text-anchor="start" font-weight="normal" textLength="63.5" lengthAdjust="spacingAndGlyphs" >1,8475</text>
<text x="1076.3" y="774.1" font-size="15.70" fill="#eeeeee" text-anchor="start" font-weight="normal" textLength="63.5" lengthAdjust="spacingAndGlyphs" >2,1422</text>
<text x="1176.3" y="774.1" font-size="15.70" fill="#eeeeee" text-anchor="start" font-weight="normal" textLength="63.5" lengthAdjust="spacingAndGlyphs" >3,7256</text>
<rect x="0.0" y="802.0" width="1560.0" height="59.0" fill="#2c2c2c" />
<rect x="808.0" y="802.0" width="433.0" height="59.0" fill="url(#barbg)" />
<path d="M0,806 Q0,802 4,802 L40,802 Q44,802 44,806 L44,861 L0,861 Z" fill="url(#tile)"/>
<circle cx="21.2" cy="811" r="7" fill="url(#circ)"/>
<polygon points="17.2,813.5 25.2,813.5 21.2,808.8" fill="#222"/>
<rect x="4" y="828" width="35.2" height="30" rx="3" fill="#ffff00" stroke="#b8b800" stroke-width="0.8"/>
<path d="M50,806 Q50,802 54,802 L196,802 Q200,802 200,806 L200,861 L50,861 Z" fill="url(#tile)"/>
<rect x="56" y="807.5" width="139" height="35.3" rx="3" fill="#c1c2a4" stroke="#8a8a70" stroke-width="0.6"/>
<text x="125.0" y="858.0" font-size="11.92" fill="#2a2a2a" text-anchor="middle" font-weight="normal" >20%</text>
<path d="M202,806 Q202,802 206,802 L348,802 Q352,802 352,806 L352,861 L202,861 Z" fill="url(#tile)"/>
<rect x="208" y="807.5" width="139" height="35.3" rx="3" fill="#c1c189" stroke="#8a8a70" stroke-width="0.6"/>
<text x="277.0" y="858.0" font-size="11.92" fill="#2a2a2a" text-anchor="middle" font-weight="normal" >40%</text>
<path d="M354,806 Q354,802 358,802 L500,802 Q504,802 504,806 L504,861 L354,861 Z" fill="url(#tile)"/>
<rect x="360" y="807.5" width="139" height="35.3" rx="3" fill="#c0c06d" stroke="#8a8a70" stroke-width="0.6"/>
<text x="429.0" y="858.0" font-size="11.92" fill="#2a2a2a" text-anchor="middle" font-weight="normal" >60%</text>
<path d="M506,806 Q506,802 510,802 L652,802 Q656,802 656,806 L656,861 L506,861 Z" fill="url(#tile)"/>
<rect x="512" y="807.5" width="139" height="35.3" rx="3" fill="#c1c04e" stroke="#8a8a70" stroke-width="0.6"/>
<text x="581.0" y="858.0" font-size="11.92" fill="#2a2a2a" text-anchor="middle" font-weight="normal" >80%</text>
<path d="M658,806 Q658,802 662,802 L804,802 Q808,802 808,806 L808,861 L658,861 Z" fill="url(#tilesel)"/>
<rect x="664" y="807.5" width="139" height="35.3" rx="3" fill="#c4c000" stroke="#8c8a00" stroke-width="0.6"/>
<text x="733.0" y="858.0" font-size="11.92" fill="#ffffff" text-anchor="middle" font-weight="bold" >100%</text>
<path d="M1241,806 Q1241,802 1245,802 L1285,802 Q1289,802 1289,806 L1289,861 L1241,861 Z" fill="url(#btn)"/>
<line x1="1241.0" y1="821.0" x2="1289.0" y2="821.0" stroke="#444" stroke-width="1"/>
<circle cx="1265" cy="811.5" r="6.5" fill="url(#circ)"/>
<polygon points="1261.3,814 1268.7,814 1265,809.5" fill="#222"/>
<rect x="1250.5" y="827.5" width="29.5" height="28.5" rx="4" fill="#a0a0a0" stroke="#2e2e2e" stroke-width="2.5"/>
<rect x="1257.5" y="834.4" width="14.4" height="14.8" fill="#000" />
<rect x="1290.8" y="802.0" width="45.1" height="29.7" fill="url(#btn)" />
<circle cx="1313" cy="817" r="10" fill="url(#circ)"/>
<rect x="1336.9" y="802.0" width="43.9" height="29.7" fill="url(#btn)" />
<circle cx="1359" cy="817" r="10" fill="url(#circ)"/>
<rect x="1381.8" y="802.0" width="44.0" height="29.7" fill="url(#btn)" />
<circle cx="1403.9" cy="817" r="10" fill="url(#circ)"/>
<rect x="1426.8" y="802.0" width="43.9" height="29.7" fill="url(#btn)" />
<circle cx="1449" cy="817" r="10" fill="url(#circ)"/>
<rect x="1471.7" y="802.0" width="44.0" height="29.7" fill="url(#btn)" />
<circle cx="1494" cy="817" r="10" fill="url(#circ)"/>
<rect x="1516.7" y="802.0" width="42.8" height="29.7" fill="url(#btn)" />
<circle cx="1540" cy="817" r="10" fill="url(#circ)"/>
<rect x="1290.8" y="833.4" width="135.0" height="27.6" fill="url(#btn)" />
<rect x="1427.0" y="833.4" width="133.0" height="27.6" fill="url(#btn)" />
<rect x="1309.0" y="813.0" width="8.0" height="8.0" fill="#2a2a2a" />
<polygon points="1356.2,812.6 1356.2,822.9 1364.5,817.6" fill="#2a2a2a"/>
<path d="M1400,812.8 L1398,812.8 L1398,822.3 L1400,822.3 M1407.6,812.8 L1409.6,812.8 L1409.6,822.3 L1407.6,822.3" stroke="#2a2a2a" stroke-width="2" fill="none"/>
<rect x="1401.6" y="816.4" width="1.8" height="1.8" fill="#2a2a2a"/><rect x="1404.4" y="816.4" width="1.8" height="1.8" fill="#2a2a2a"/>
<path d="M1449,816.9 C1446.5,813.8 1442.5,813.8 1442.5,816.9 C1442.5,820 1446.5,820 1449,816.9 C1451.5,813.8 1455.5,813.8 1455.5,816.9 C1455.5,820 1451.5,820 1449,816.9 Z" stroke="#2a2a2a" stroke-width="1.9" fill="none"/>
<path d="M1489.6,817.5 A4.6,4.6 0 0 1 1497.5,813.8" stroke="#2a2a2a" stroke-width="2.2" fill="none"/><polygon points="1495.5,811.2 1499.6,811.8 1499.2,816.2" fill="#2a2a2a"/>
<path d="M1498.4,816.5 A4.6,4.6 0 0 1 1490.5,820.2" stroke="#2a2a2a" stroke-width="2.2" fill="none"/><polygon points="1492.5,822.8 1488.4,822.2 1488.8,817.8" fill="#2a2a2a"/>
<circle cx="1321" cy="848" r="10" fill="url(#circ)"/>
<circle cx="1534.2" cy="848" r="10" fill="url(#circ)"/>
<path d="M1320.5,843.3 L1316.6,848.2 L1320.5,853 M1324.8,843.3 L1320.9,848.2 L1324.8,853" stroke="#2a2a2a" stroke-width="1.4" fill="none"/>
<path d="M1530.3,843.7 L1534.2,848.3 L1530.3,852.8 M1535,843.7 L1538.9,848.3 L1535,852.8" stroke="#2a2a2a" stroke-width="1.4" fill="none"/>
<text x="1348.2" y="856.0" font-size="22.97" fill="#2a2a2a" text-anchor="start" font-weight="normal" textLength="50.0" lengthAdjust="spacingAndGlyphs" stroke="#2a2a2a" stroke-width="0.5">Back</text>
<text x="1454.8" y="856.0" font-size="22.97" fill="#2a2a2a" text-anchor="start" font-weight="normal" textLength="51.1" lengthAdjust="spacingAndGlyphs" stroke="#2a2a2a" stroke-width="0.5">Next</text>
</svg>
<canvas id="cie" width="600" height="461"></canvas>
<svg width="1560" height="861" viewBox="0 0 1560 861" style="pointer-events:none">
<rect x="1071.1" y="79.5" width="12.6" height="12.6" fill="rgba(255,255,255,0.2)" stroke="rgba(255,255,255,0.85)" stroke-width="1.4"/>
<rect x="1082.7" y="90.4" width="12.6" height="12.6" fill="rgba(255,255,255,0.2)" stroke="rgba(255,255,255,0.85)" stroke-width="1.4"/>
<rect x="1094.2" y="102.5" width="12.6" height="12.6" fill="rgba(255,255,255,0.2)" stroke="rgba(255,255,255,0.85)" stroke-width="1.4"/>
<rect x="1108.8" y="116.5" width="12.6" height="12.6" fill="rgba(255,255,255,0.2)" stroke="rgba(255,255,255,0.85)" stroke-width="1.4"/>
<rect x="1124.7" y="131.6" width="12.6" height="12.6" fill="rgba(255,255,255,0.2)" stroke="rgba(255,255,255,0.85)" stroke-width="1.4"/>
<rect x="1150.7" y="86.3" width="12.6" height="12.6" fill="rgba(255,255,255,0.2)" stroke="rgba(255,255,255,0.85)" stroke-width="1.4"/>
<rect x="1148.8" y="97.7" width="12.6" height="12.6" fill="rgba(255,255,255,0.2)" stroke="rgba(255,255,255,0.85)" stroke-width="1.4"/>
<rect x="1148.0" y="109.0" width="12.6" height="12.6" fill="rgba(255,255,255,0.2)" stroke="rgba(255,255,255,0.85)" stroke-width="1.4"/>
<rect x="1147.3" y="121.8" width="12.6" height="12.6" fill="rgba(255,255,255,0.2)" stroke="rgba(255,255,255,0.85)" stroke-width="1.4"/>
<rect x="1146.5" y="136.2" width="12.6" height="12.6" fill="rgba(255,255,255,0.2)" stroke="rgba(255,255,255,0.85)" stroke-width="1.4"/>
<rect x="1085.4" y="162.6" width="12.6" height="12.6" fill="rgba(255,255,255,0.2)" stroke="rgba(255,255,255,0.85)" stroke-width="1.4"/>
<rect x="1096.7" y="159.5" width="12.6" height="12.6" fill="rgba(255,255,255,0.2)" stroke="rgba(255,255,255,0.85)" stroke-width="1.4"/>
<rect x="1108.8" y="158.0" width="12.6" height="12.6" fill="rgba(255,255,255,0.2)" stroke="rgba(255,255,255,0.85)" stroke-width="1.4"/>
<rect x="1120.9" y="155.0" width="12.6" height="12.6" fill="rgba(255,255,255,0.2)" stroke="rgba(255,255,255,0.85)" stroke-width="1.4"/>
<rect x="1132.9" y="154.3" width="12.6" height="12.6" fill="rgba(255,255,255,0.2)" stroke="rgba(255,255,255,0.85)" stroke-width="1.4"/>
<rect x="1251.7" y="257.4" width="12.6" height="12.6" fill="rgba(255,255,255,0.2)" stroke="rgba(255,255,255,0.85)" stroke-width="1.4"/>
<rect x="1220.7" y="228.6" width="12.6" height="12.6" fill="rgba(255,255,255,0.2)" stroke="rgba(255,255,255,0.85)" stroke-width="1.4"/>
<rect x="1196.7" y="204.5" width="12.6" height="12.6" fill="rgba(255,255,255,0.2)" stroke="rgba(255,255,255,0.85)" stroke-width="1.4"/>
<rect x="1178.5" y="185.7" width="12.6" height="12.6" fill="rgba(255,255,255,0.2)" stroke="rgba(255,255,255,0.85)" stroke-width="1.4"/>
<rect x="1160.7" y="167.3" width="12.6" height="12.6" fill="rgba(255,255,255,0.2)" stroke="rgba(255,255,255,0.85)" stroke-width="1.4"/>
<rect x="1396.8" y="109.6" width="12.6" height="12.6" fill="rgba(255,255,255,0.2)" stroke="rgba(255,255,255,0.85)" stroke-width="1.4"/>
<rect x="1336.6" y="119.4" width="12.6" height="12.6" fill="rgba(255,255,255,0.2)" stroke="rgba(255,255,255,0.85)" stroke-width="1.4"/>
<rect x="1285.6" y="128.6" width="12.6" height="12.6" fill="rgba(255,255,255,0.2)" stroke="rgba(255,255,255,0.85)" stroke-width="1.4"/>
<rect x="1239.6" y="135.5" width="12.6" height="12.6" fill="rgba(255,255,255,0.2)" stroke="rgba(255,255,255,0.85)" stroke-width="1.4"/>
<rect x="1189.6" y="144.5" width="12.6" height="12.6" fill="rgba(255,255,255,0.2)" stroke="rgba(255,255,255,0.85)" stroke-width="1.4"/>
<rect x="1122.5" y="390.4" width="12.6" height="12.6" fill="rgba(255,255,255,0.2)" stroke="rgba(255,255,255,0.85)" stroke-width="1.4"/>
<rect x="1129.6" y="310.7" width="12.6" height="12.6" fill="rgba(255,255,255,0.2)" stroke="rgba(255,255,255,0.85)" stroke-width="1.4"/>
<rect x="1134.6" y="256.4" width="12.6" height="12.6" fill="rgba(255,255,255,0.2)" stroke="rgba(255,255,255,0.85)" stroke-width="1.4"/>
<rect x="1138.4" y="214.5" width="12.6" height="12.6" fill="rgba(255,255,255,0.2)" stroke="rgba(255,255,255,0.85)" stroke-width="1.4"/>
<rect x="1141.5" y="179.4" width="12.6" height="12.6" fill="rgba(255,255,255,0.2)" stroke="rgba(255,255,255,0.85)" stroke-width="1.4"/>
<circle cx="1080.4" cy="85.1" r="3.9" fill="#2aa02a" stroke="#141414" stroke-width="1.2"/>
<circle cx="1090.5" cy="95.7" r="3.9" fill="#4ea04e" stroke="#141414" stroke-width="1.2"/>
<circle cx="1103.3" cy="108.5" r="3.9" fill="#68a468" stroke="#141414" stroke-width="1.2"/>
<circle cx="1115.4" cy="122.4" r="3.9" fill="#80aa80" stroke="#141414" stroke-width="1.2"/>
<circle cx="1132.5" cy="139.4" r="3.9" fill="#96ac96" stroke="#141414" stroke-width="1.2"/>
<circle cx="1159.3" cy="91.9" r="3.9" fill="#b2ae30" stroke="#141414" stroke-width="1.2"/>
<circle cx="1157.4" cy="103.5" r="3.9" fill="#b4b050" stroke="#141414" stroke-width="1.2"/>
<circle cx="1156.3" cy="114.8" r="3.9" fill="#b4b068" stroke="#141414" stroke-width="1.2"/>
<circle cx="1154.3" cy="127.4" r="3.9" fill="#b4b27e" stroke="#141414" stroke-width="1.2"/>
<circle cx="1152.4" cy="143.5" r="3.9" fill="#b4b496" stroke="#141414" stroke-width="1.2"/>
<circle cx="1090.2" cy="167.4" r="3.9" fill="#30a8b0" stroke="#141414" stroke-width="1.2"/>
<circle cx="1103.3" cy="166.3" r="3.9" fill="#55a4a8" stroke="#141414" stroke-width="1.2"/>
<circle cx="1114.3" cy="163.3" r="3.9" fill="#70a4a6" stroke="#141414" stroke-width="1.2"/>
<circle cx="1127.2" cy="162.4" r="3.9" fill="#86a6a8" stroke="#141414" stroke-width="1.2"/>
<circle cx="1138.5" cy="159.4" r="3.9" fill="#9aaaaa" stroke="#141414" stroke-width="1.2"/>
<circle cx="1253.4" cy="264.3" r="3.9" fill="#a828a8" stroke="#141414" stroke-width="1.2"/>
<circle cx="1223.5" cy="232.3" r="3.9" fill="#a858a8" stroke="#141414" stroke-width="1.2"/>
<circle cx="1200.5" cy="209.1" r="3.9" fill="#a874a8" stroke="#141414" stroke-width="1.2"/>
<circle cx="1182.3" cy="190.3" r="3.9" fill="#aa8aaa" stroke="#141414" stroke-width="1.2"/>
<circle cx="1165.4" cy="172.1" r="3.9" fill="#b09cb0" stroke="#141414" stroke-width="1.2"/>
<circle cx="1406.0" cy="115.0" r="3.9" fill="#a82020" stroke="#141414" stroke-width="1.2"/>
<circle cx="1351.6" cy="123.4" r="3.9" fill="#b04848" stroke="#141414" stroke-width="1.2"/>
<circle cx="1291.9" cy="134.1" r="3.9" fill="#b05858" stroke="#141414" stroke-width="1.2"/>
<circle cx="1247.1" cy="141.4" r="3.9" fill="#a86868" stroke="#141414" stroke-width="1.2"/>
<circle cx="1194.8" cy="150.4" r="3.9" fill="#b08888" stroke="#141414" stroke-width="1.2"/>
<circle cx="1118.3" cy="393.4" r="3.9" fill="#2a2aa8" stroke="#141414" stroke-width="1.2"/>
<circle cx="1129.2" cy="316.5" r="3.9" fill="#4a4aa8" stroke="#141414" stroke-width="1.2"/>
<circle cx="1137.4" cy="261.4" r="3.9" fill="#6464a8" stroke="#141414" stroke-width="1.2"/>
<circle cx="1141.3" cy="219.6" r="3.9" fill="#7a7aaa" stroke="#141414" stroke-width="1.2"/>
<circle cx="1147.2" cy="185.3" r="3.9" fill="#9090b0" stroke="#141414" stroke-width="1.2"/>
<rect x="1143.7" y="151.7" width="12.6" height="12.6" fill="rgba(255,255,255,0.3)" stroke="#000" stroke-width="1.8"/>
<circle cx="1151.3" cy="158.3" r="4.3" fill="#ffffff" stroke="#222" stroke-width="1"/>
<defs><linearGradient id="insU" x1="0" y1="0" x2="1" y2="1"><stop offset="0" stop-color="#5c9800"/><stop offset="0.5" stop-color="#939400"/><stop offset="1" stop-color="#9a7200"/></linearGradient><linearGradient id="insL" x1="0" y1="0" x2="1" y2="1"><stop offset="0" stop-color="#b0ff00"/><stop offset="0.5" stop-color="#ffff00"/><stop offset="1" stop-color="#ffb000"/></linearGradient></defs>
<rect x="1346" y="374" width="205.2" height="140.5" fill="#2c2c2c"/>
<rect x="1349" y="377" width="199.2" height="134.5" fill="#8a8a8a"/>
<polygon points="1350.5,378.5 1546.7,378.5 1546.7,496.3 1350.5,391.8" fill="url(#insU)"/>
<polygon points="1350.5,391.8 1546.7,496.3 1546.7,510 1350.5,510" fill="url(#insL)"/>
<rect x="1440.1" y="436.7" width="13.6" height="13.6" fill="none" stroke="#ffffff" stroke-width="1.6"/>
<circle cx="1469.4" cy="439.3" r="4.2" fill="#b4b000" stroke="#1a1a1a" stroke-width="1.4"/>
</svg>
<script>(function(){
var xy=[[0.17411,0.00496],[0.1738,0.00492],[0.17334,0.0048],[0.17258,0.0048],[0.17141,0.0051],[0.16888,0.0069],[0.16441,0.01086],[0.15664,0.0177],[0.14396,0.0297],[0.12412,0.0578],[0.10959,0.08684],[0.09129,0.1327],[0.06871,0.20072],[0.04539,0.29498],[0.02346,0.4127],[0.00817,0.53842],[0.00386,0.65482],[0.01387,0.75019],[0.03885,0.81202],[0.0743,0.8338],[0.11416,0.82621],[0.15472,0.80586],[0.19288,0.78163],[0.22962,0.75433],[0.26578,0.72432],[0.3016,0.69231],[0.33736,0.65885],[0.3731,0.62445],[0.40874,0.58961],[0.44406,0.55471],[0.47877,0.5202],[0.51249,0.48659],[0.54479,0.45443],[0.57515,0.42423],[0.60293,0.3965],[0.62704,0.37249],[0.64823,0.35139],[0.66576,0.33401],[0.6915,0.30834],[0.70792,0.29203],[0.71903,0.28093],[0.72599,0.27401],[0.73036,0.26964],[0.73469,0.26531]];
var W=600,H=461,OX=954,OY=58,UX=953.5,SU=997,VY=520,SV=769.5;
function uv(x,y){var d=-2*x+12*y+3;return [UX+4*x/d*SU-OX,VY-9*y/d*SV-OY];}
var P=[];for(var i=0;i<xy.length;i++)P.push(uv(xy[i][0],xy[i][1]));
var S=[];
for(var i=0;i<P.length-1;i++){var p0=P[Math.max(0,i-1)],p1=P[i],p2=P[i+1],p3=P[Math.min(P.length-1,i+2)];
 for(var t=0;t<1;t+=0.125){var t2=t*t,t3=t2*t;
  S.push([0.5*((2*p1[0])+(-p0[0]+p2[0])*t+(2*p0[0]-5*p1[0]+4*p2[0]-p3[0])*t2+(-p0[0]+3*p1[0]-3*p2[0]+p3[0])*t3),
          0.5*((2*p1[1])+(-p0[1]+p2[1])*t+(2*p0[1]-5*p1[1]+4*p2[1]-p3[1])*t2+(-p0[1]+3*p1[1]-3*p2[1]+p3[1])*t3)]);}}
S.push(P[P.length-1]);
var TR=[uv(0.64,0.33),uv(0.30,0.60),uv(0.15,0.06)];
function GM(c){return Math.pow(Math.max(0,c),1/1.2);}
var DARK=0.6;
function mk(){var c=document.createElement('canvas');c.width=W;c.height=H;return c;}
var cb=mk(),cd=mk();
var xb=cb.getContext('2d'),xd=cd.getContext('2d');
var ib=xb.createImageData(W,H),id=xd.createImageData(W,H);
var B=ib.data,Dd=id.data;
for(var py=0;py<H;py++){var yy=py+0.5;
 for(var px=0;px<W;px++){var xx=px+0.5;
   var u=(xx+OX-UX)/SU,v=(VY-(yy+OY))/SV;
   if(v<0.004)v=0.004;
   var dd=6*u-16*v+12;var X=9*u/dd,Y=4*v/dd;
   var XX=X/Y,ZZ=(1-X-Y)/Y;
   var r=3.2406*XX-1.5372-0.4986*ZZ,gg=-0.9689*XX+1.8758+0.0415*ZZ,bb=0.0557*XX-0.2040+1.0570*ZZ;
   r=Math.max(0,r);gg=Math.max(0,gg);bb=Math.max(0,bb);
   var m=Math.max(r,gg,bb)||1;r=GM(r/m);gg=GM(gg/m);bb=GM(bb/m);
   var o=(py*W+px)*4;
   B[o]=r*255;B[o+1]=gg*255;B[o+2]=bb*255;B[o+3]=255;
   Dd[o]=r*255*DARK;Dd[o+1]=gg*255*DARK;Dd[o+2]=bb*255*DARK;Dd[o+3]=255;
 }}
xb.putImageData(ib,0,0);xd.putImageData(id,0,0);
var c=document.getElementById('cie');var ctx=c.getContext('2d');
ctx.beginPath();ctx.moveTo(S[0][0],S[0][1]);for(var i=1;i<S.length;i++)ctx.lineTo(S[i][0],S[i][1]);ctx.closePath();
ctx.fillStyle=ctx.createPattern(cd,'no-repeat');ctx.fill();
ctx.save();ctx.clip();
ctx.beginPath();ctx.moveTo(TR[0][0],TR[0][1]);ctx.lineTo(TR[1][0],TR[1][1]);ctx.lineTo(TR[2][0],TR[2][1]);ctx.closePath();
ctx.fillStyle=ctx.createPattern(cb,'no-repeat');ctx.fill();
ctx.restore();
})();
</script>
</body></html>
